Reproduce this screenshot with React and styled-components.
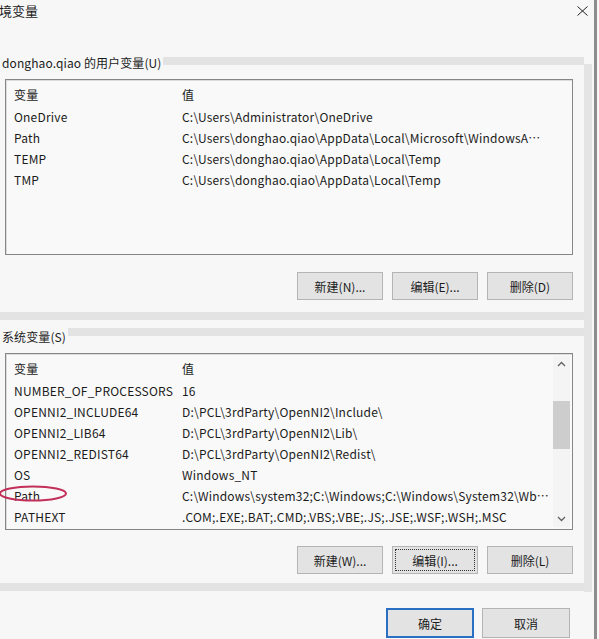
import React from 'react';
import styled, { createGlobalStyle } from 'styled-components';

const GlobalStyle = createGlobalStyle`
  html, body { margin: 0; padding: 0; background: #f7f7f7; }
  body {
    font-family: "Noto Sans CJK SC", "Noto Sans", "Liberation Sans", sans-serif;
    font-size: 12px;
    color: #1b1b1b;
  }
`;

const Page = styled.div`
  position: relative;
  display: flex;
  width: 599px;
  height: 639px;
  overflow: hidden;
  background: #f7f7f7;
`;

const Main = styled.div`
  width: 584px;
  flex-shrink: 0;
  display: flex;
  flex-direction: column;
`;

const RightRail = styled.div`
  width: 8px;
  margin-top: 64px;
  height: 528px;
  background: #e4e4e4;
  flex-shrink: 0;
`;

const WindowEdge = styled.div`
  width: 3px;
  margin-left: 2px;
  height: 100%;
  background: #8d8d8d;
  flex-shrink: 0;
`;

const TitleBar = styled.div`
  height: 55px;
  display: flex;
  justify-content: space-between;
  align-items: flex-start;
`;

const Title = styled.div`
  margin: 3px 0 0 -1px;
  font-size: 13px;
  line-height: 16px;
`;

const Close = styled.svg`
  margin: 6px -4px 0 0;
  width: 11px;
  height: 10px;
`;

const GroupHead = styled.div`
  display: flex;
  align-items: flex-start;
  margin-top: ${p => p.$top || 0}px;
`;

const GroupLabel = styled.span`
  padding: ${p => p.$pad || 0}px 2px 0 2px;
  line-height: 14px;
  background: #f7f7f7;
  white-space: nowrap;
  letter-spacing: 0.1px;
`;

const HeadBand = styled.div`
  flex: 1;
  height: 8px;
  margin-top: ${p => p.$top || 0}px;
  background: #e3e3e3;
`;

const Divider = styled.div`
  height: 8px;
  margin-top: ${p => p.$top}px;
  background: #e3e3e3;
`;

const ListBox = styled.div`
  display: flex;
  margin: ${p => p.$top}px 0 0 5px;
  width: 568px;
  height: ${p => p.$h}px;
  box-sizing: border-box;
  border: 1px solid #868686;
  box-shadow: inset 1px 1px 0 #dcdcdc;
  background: #f9f9f9;
  overflow: hidden;
`;

const Rows = styled.div`
  flex: 1;
  min-width: 0;
  padding-top: 2px;
`;

const Row = styled.div`
  display: flex;
  height: ${p => (p.$header ? 24 : 21)}px;
  align-items: center;
  padding-left: 8px;
  letter-spacing: 0.2px;
`;

const NameCell = styled.div`
  width: 168px;
  flex-shrink: 0;
  white-space: nowrap;
  overflow: hidden;
`;

const ValueCell = styled.div`
  flex: 1;
  min-width: 0;
  white-space: nowrap;
  overflow: hidden;
  text-overflow: ellipsis;
  padding-right: ${p => p.$pr || 4}px;
`;

const ScrollBar = styled.div`
  width: 17px;
  margin: 2px 2px 2px 0;
  display: flex;
  flex-direction: column;
  align-items: center;
  background: #f4f4f4;
`;

const Arrow = styled.svg`
  width: 17px;
  height: 17px;
  flex-shrink: 0;
`;

const Track = styled.div`
  flex: 1;
  width: 100%;
  padding-top: 28px;
`;

const Thumb = styled.div`
  width: 100%;
  height: 48px;
  background: #cdcdcd;
`;

const ButtonRow = styled.div`
  display: flex;
  justify-content: flex-end;
  gap: ${p => p.$gap || 9}px;
  margin-top: ${p => p.$top}px;
  padding-right: ${p => p.$pr || 11}px;
`;

const Button = styled.div`
  width: ${p => p.$w || 86}px;
  height: ${p => p.$h || 28}px;
  box-sizing: border-box;
  display: flex;
  align-items: center;
  justify-content: center;
  background: #e3e3e3;
  border: ${p => (p.$primary ? '2px solid #2b6fc4' : '1px solid #b4b4b4')};
  outline: ${p => (p.$focus ? '1px dotted #333' : 'none')};
  outline-offset: -4px;
  font-size: 12px;
  white-space: nowrap;
`;

const Ellipse = styled.svg`
  position: absolute;
  left: 0;
  top: 485px;
  width: 70px;
  height: 17px;
  pointer-events: none;
`;

const userVars = [
  ['OneDrive', 'C:\\Users\\Administrator\\OneDrive'],
  ['Path', 'C:\\Users\\donghao.qiao\\AppData\\Local\\Microsoft\\WindowsApps;C:\\Users\\donghao.qiao\\bin'],
  ['TEMP', 'C:\\Users\\donghao.qiao\\AppData\\Local\\Temp'],
  ['TMP', 'C:\\Users\\donghao.qiao\\AppData\\Local\\Temp'],
];

const sysVars = [
  ['NUMBER_OF_PROCESSORS', '16'],
  ['OPENNI2_INCLUDE64', 'D:\\PCL\\3rdParty\\OpenNI2\\Include\\'],
  ['OPENNI2_LIB64', 'D:\\PCL\\3rdParty\\OpenNI2\\Lib\\'],
  ['OPENNI2_REDIST64', 'D:\\PCL\\3rdParty\\OpenNI2\\Redist\\'],
  ['OS', 'Windows_NT'],
  ['Path', 'C:\\Windows\\system32;C:\\Windows;C:\\Windows\\System32\\Wbem;C:\\Windows\\System32\\WindowsPowerShell'],
  ['PATHEXT', '.COM;.EXE;.BAT;.CMD;.VBS;.VBE;.JS;.JSE;.WSF;.WSH;.MSC'],
  ['PROCESSOR_ARCHITECTURE', 'AMD64'],
];

const VarList = ({ items, top, h, pr, scroll }) => (
  <ListBox $top={top} $h={h}>
    <Rows>
      <Row $header>
        <NameCell>变量</NameCell>
        <ValueCell $pr={pr}>值</ValueCell>
      </Row>
      {items.map(([name, value]) => (
        <Row key={name}>
          <NameCell>{name}</NameCell>
          <ValueCell $pr={pr}>{value}</ValueCell>
        </Row>
      ))}
    </Rows>
    {scroll && (
      <ScrollBar>
        <Arrow viewBox="0 0 17 17">
          <path d="M5 10 L8.5 6.5 L12 10" fill="none" stroke="#606060" strokeWidth="1.3" />
        </Arrow>
        <Track>
          <Thumb />
        </Track>
        <Arrow viewBox="0 0 17 17">
          <path d="M5 7 L8.5 10.5 L12 7" fill="none" stroke="#606060" strokeWidth="1.3" />
        </Arrow>
      </ScrollBar>
    )}
  </ListBox>
);

const App = () => (
  <>
    <GlobalStyle />
    <Page>
      <Main>
        <TitleBar>
          <Title>境变量</Title>
          <Close viewBox="0 0 11 10">
            <path d="M0.5 0.5 L10.5 9.5 M10.5 0.5 L0.5 9.5" stroke="#222" strokeWidth="1" />
          </Close>
        </TitleBar>

        <GroupHead>
          <GroupLabel $pad={1}>donghao.qiao 的用户变量(U)</GroupLabel>
          <HeadBand $top={2} />
        </GroupHead>
        <VarList items={userVars} top={9} h={176} pr={26} />
        <ButtonRow $top={17}>
          <Button>新建(N)...</Button>
          <Button>编辑(E)...</Button>
          <Button>删除(D)</Button>
        </ButtonRow>
        <Divider $top={12} />

        <GroupHead $top={8}>
          <GroupLabel $pad={2}>系统变量(S)</GroupLabel>
          <HeadBand />
        </GroupHead>
        <VarList items={sysVars} top={9} h={177} pr={4} scroll />
        <ButtonRow $top={16}>
          <Button>新建(W)...</Button>
          <Button $focus>编辑(I)...</Button>
          <Button>删除(L)</Button>
        </ButtonRow>
        <Divider $top={9} />

        <ButtonRow $top={17} $gap={8} $pr={14}>
          <Button $w={88} $h={30} $primary>确定</Button>
          <Button $w={88} $h={30}>取消</Button>
        </ButtonRow>
      </Main>
      <RightRail />
      <WindowEdge />
      <Ellipse viewBox="0 0 70 17">
        <ellipse cx="33" cy="8.5" rx="33" ry="7" fill="none" stroke="#c2305a" strokeWidth="2" />
      </Ellipse>
    </Page>
  </>
);

export default App;
